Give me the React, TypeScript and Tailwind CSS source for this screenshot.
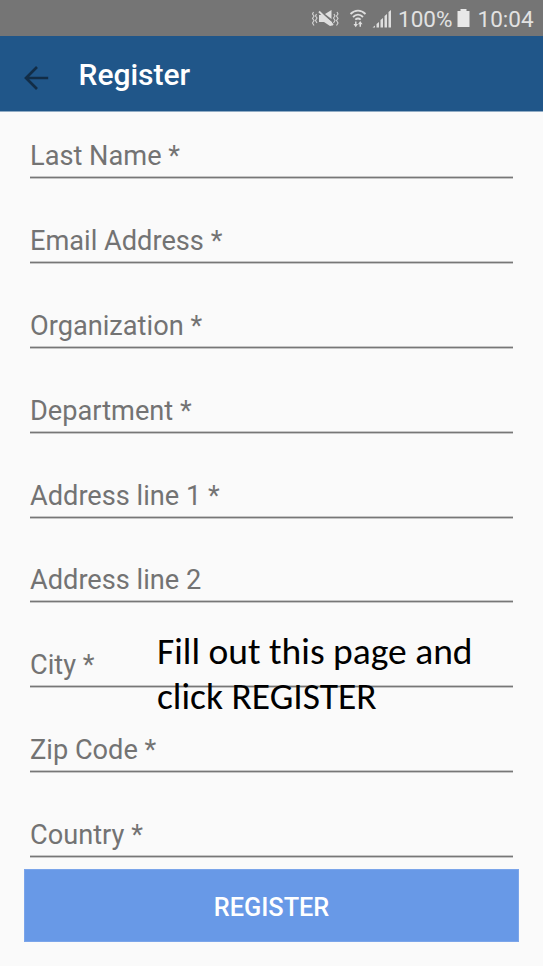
const fields = [
  'Last Name *',
  'Email Address *',
  'Organization *',
  'Department *',
  'Address line 1 *',
  'Address line 2',
  'City *',
  'Zip Code *',
  'Country *',
];

function StatusIcons() {
  return (
    <svg width="82" height="22" viewBox="0 0 82 22" fill="none" className="mt-px shrink-0">
      <g stroke="#d4d4d4" strokeWidth="1.1">
        <path d="M2.500 4L1.500 6l1.500 2-1.500 2.500 1.500 2-1.500 2.500 1.500 2.500M5.500 6L4.500 8 6 10l-1.500 2.500L6 15" />
        <path d="M26 4l1 2-1.500 2 1.500 2.500-1.500 2 1.500 2.500-1.500 2.500M23 6l1 2-1.500 2 1.500 2.500-1.500 2.500" />
      </g>
      <path d="M8 7h4l9 7v3.500l-2 .5-6-4H8zM14 6l6.500-4v9z" fill="#dedede" />
      <path d="M8 3.500L22 17" stroke="#dedede" strokeWidth="1.8" />
      <g stroke="#dedede" strokeWidth="1.8">
        <path d="M39.500 6c4.500-4.400 10.500-4.400 15 0M42 9c3-3 7-3 10 0M44.300 11.700c1.700-1.500 3.700-1.500 5.400 0" />
      </g>
      <path d="M42.500 16h1.600v-2.500h1.400V16H47l-2.300 3.300zM47 16.300l2.200-3.300 2.300 3.300H50v2.500h-1.500v-2.500z" fill="#dedede" />
      <path d="M61.500 19.500l2.500-2v2zM65.500 16l2.500-2v5.500h-2.500zM69.500 12l2.500-2v9.500h-2.500zM73.500 8l2.500-2v13.500h-2.500zM77.500 4l2.500-2v17.500h-2.500z" fill="#dedede" />
    </svg>
  );
}

export default function App() {
  return (
    <div className="relative flex h-[966px] w-[543px] flex-col overflow-hidden bg-[#fafafa] font-['Roboto',sans-serif]">
      <header className="flex h-9 shrink-0 items-center bg-[#757575] pl-[311px] text-[22.5px] text-[#e2e2e2]">
        <StatusIcons />
        <span className="ml-[5px] w-[56px] whitespace-nowrap pt-[2px] leading-9">100%</span>
        <svg width="13" height="20" viewBox="0 0 13 20" className="ml-[3px] shrink-0">
          <path d="M3.500 1h6v2H12.500v16H.5V3h3z" fill="#e8e8e8" />
        </svg>
        <span className="ml-[7.500px] whitespace-nowrap pt-[2px] leading-9">10:04</span>
      </header>
      <div className="flex h-[75px] shrink-0 items-center bg-[#205689] pl-6">
        <svg width="25" height="26" viewBox="0 0 25 26" fill="none" stroke="#122d47" strokeWidth="2.7" className="mt-[9px]">
          <path d="M24.200 13H2.500M13 2L2 13l11 11" />
        </svg>
        <h1 className="ml-[29.500px] mt-[3px] text-[30px] font-medium leading-9 text-white">Register</h1>
      </div>
      <div className="h-px shrink-0 bg-[#90abc4]" />
      <main className="flex flex-col px-[30px] pt-[24px]">
        {fields.map((label) => (
          <label key={label} className="flex h-[84.900px] flex-col text-[27.200px] leading-[40px] text-[#737373]">
            <span className="h-[40px] whitespace-nowrap">{label}</span>
            <span className="h-[3px] shrink-0 border-y border-[#c6c6c6] bg-[#777777]" />
          </label>
        ))}
      </main>
      <button className="absolute left-6 top-[869px] flex h-[73px] w-[495px] items-center justify-center border border-[#7ba5ea] bg-[#6899e7] pt-[4px] text-[25.300px] font-medium text-white">
        REGISTER
      </button>
      <p className="absolute left-[157px] top-[629px] whitespace-nowrap font-['Carlito','Lato',sans-serif] text-[37.500px] leading-[45px] text-black">
        <span className="block">Fill out this page and</span>
        <span className="block">click REGISTER</span>
      </p>
    </div>
  );
}
